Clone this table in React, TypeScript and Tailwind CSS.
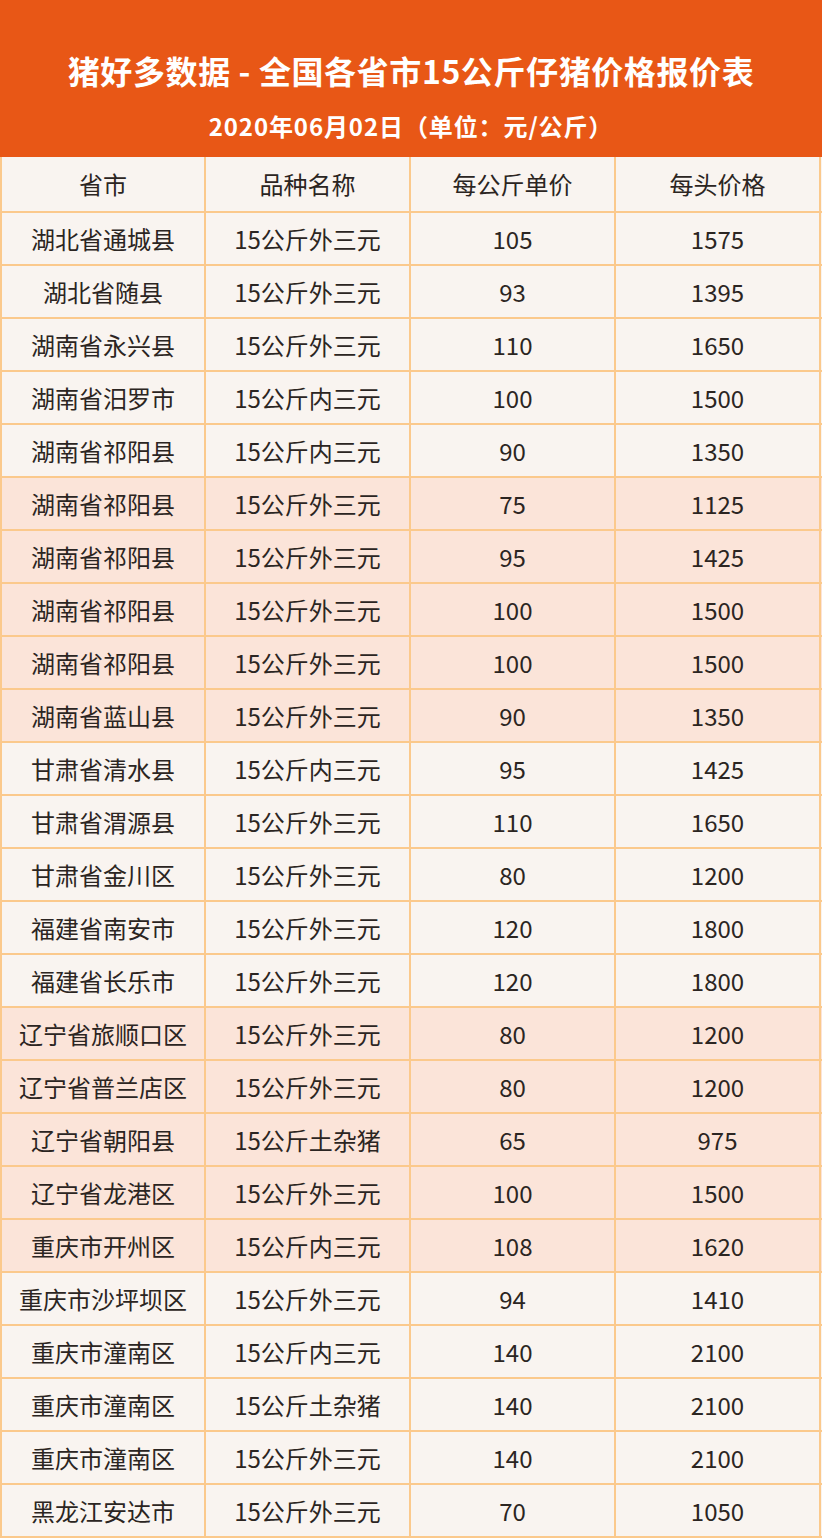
import React from "react";

const rows: [string, string, string, string][] = [
  ["湖北省通城县", "15公斤外三元", "105", "1575"],
  ["湖北省随县", "15公斤外三元", "93", "1395"],
  ["湖南省永兴县", "15公斤外三元", "110", "1650"],
  ["湖南省汨罗市", "15公斤内三元", "100", "1500"],
  ["湖南省祁阳县", "15公斤内三元", "90", "1350"],
  ["湖南省祁阳县", "15公斤外三元", "75", "1125"],
  ["湖南省祁阳县", "15公斤外三元", "95", "1425"],
  ["湖南省祁阳县", "15公斤外三元", "100", "1500"],
  ["湖南省祁阳县", "15公斤外三元", "100", "1500"],
  ["湖南省蓝山县", "15公斤外三元", "90", "1350"],
  ["甘肃省清水县", "15公斤内三元", "95", "1425"],
  ["甘肃省渭源县", "15公斤外三元", "110", "1650"],
  ["甘肃省金川区", "15公斤外三元", "80", "1200"],
  ["福建省南安市", "15公斤外三元", "120", "1800"],
  ["福建省长乐市", "15公斤外三元", "120", "1800"],
  ["辽宁省旅顺口区", "15公斤外三元", "80", "1200"],
  ["辽宁省普兰店区", "15公斤外三元", "80", "1200"],
  ["辽宁省朝阳县", "15公斤土杂猪", "65", "975"],
  ["辽宁省龙港区", "15公斤外三元", "100", "1500"],
  ["重庆市开州区", "15公斤内三元", "108", "1620"],
  ["重庆市沙坪坝区", "15公斤外三元", "94", "1410"],
  ["重庆市潼南区", "15公斤内三元", "140", "2100"],
  ["重庆市潼南区", "15公斤土杂猪", "140", "2100"],
  ["重庆市潼南区", "15公斤外三元", "140", "2100"],
  ["黑龙江安达市", "15公斤外三元", "70", "1050"],
];

const pink = new Set([5, 6, 7, 8, 9, 15, 16, 17, 18, 19]);

function Row({ cells, bg, h }: { cells: string[]; bg: string; h: string }) {
  return (
    <div className={`flex ${h} ${bg} border-b-2 border-[#fbc98c]`}>
      {cells.map((c, i) => (
        <div
          key={i}
          className={`flex items-center justify-center border-r-2 border-[#fbc98c] ${
            i === 0 ? "w-[206px] border-l-2" : "w-[205px]"
          }`}
        >
          {c}
        </div>
      ))}
    </div>
  );
}

export default function App() {
  return (
    <div
      className="w-[822px] h-[1538px] overflow-hidden text-[#2b2522]"
      style={{ fontFamily: '"Noto Sans CJK SC", "Noto Sans", sans-serif' }}
    >
      <div className="h-[157px] bg-[#e85716] flex flex-col items-center text-white font-bold">
        <div className="mt-[48px] text-[32px] leading-[44px] tracking-[0.6px]">
          猪好多数据 - 全国各省市15公斤仔猪价格报价表
        </div>
        <div className="mt-[19px] text-[24px] leading-[30px] tracking-[0.9px]">
          2020年06月02日（单位：元/公斤）
        </div>
      </div>
      <div className="text-[24px] leading-none">
        <Row cells={["省市", "品种名称", "每公斤单价", "每头价格"]} bg="bg-[#f9f4f0]" h="h-[56px]" />
        {rows.map((r, i) => (
          <Row key={i} cells={r} bg={pink.has(i) ? "bg-[#fbe4d9]" : "bg-[#f9f4f0]"} h="h-[53px]" />
        ))}
      </div>
    </div>
  );
}
